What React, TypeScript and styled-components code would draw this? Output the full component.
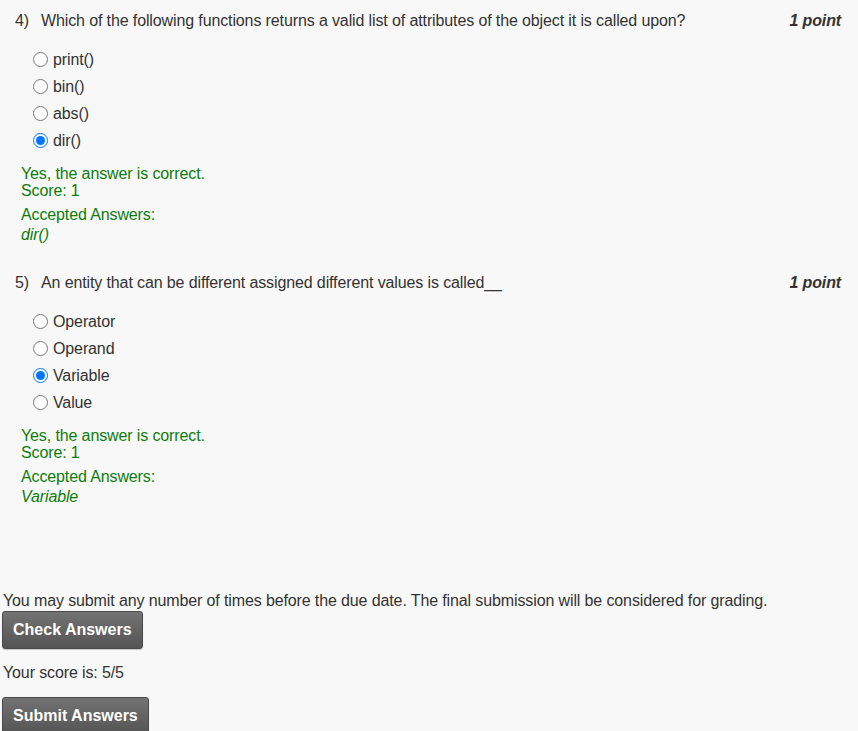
import React from "react";
import styled, { createGlobalStyle } from "styled-components";

const Global = createGlobalStyle`
  html, body { margin: 0; padding: 0; background: #f8f8f8; }
  body {
    font-family: "Liberation Sans", Arial, sans-serif;
    color: #333;
    font-size: 16px;
    letter-spacing: -0.12px;
  }
`;

const Page = styled.div`
  display: flex;
  flex-direction: column;
`;

const QuestionBlock = styled.section<{ $gap?: number }>`
  padding: 11px 17px 0 15px;
  margin-top: ${(p) => p.$gap ?? 0}px;
`;

const TitleRow = styled.div`
  display: flex;
  justify-content: space-between;
  align-items: center;
  line-height: 20px;
  height: 20px;
`;

const TitleText = styled.div`
  display: flex;
  gap: 12px;
`;

const Points = styled.span`
  font-weight: bold;
  font-style: italic;
`;

const Options = styled.div`
  display: flex;
  flex-direction: column;
  padding: 15px 0 0 18px;
`;

const OptionRow = styled.label`
  display: flex;
  align-items: center;
  height: 27px;
  gap: 5px;
`;

const Radio = styled.input`
  width: 15px;
  height: 15px;
  margin: 0;
  accent-color: #0075ff;
`;

const Feedback = styled.div`
  color: #0b7d0b;
  padding: 11px 0 0 6px;
  display: flex;
  flex-direction: column;
`;

const FeedLine = styled.div<{ $mt?: number }>`
  line-height: 17px;
  margin-top: ${(p) => p.$mt ?? 0}px;
`;

const Answer = styled.div`
  font-style: italic;
  line-height: 24px;
`;

const Footer = styled.div`
  margin-top: 83px;
  padding-left: 3px;
  display: flex;
  flex-direction: column;
  align-items: flex-start;
`;

const FooterText = styled.div<{ $mt?: number }>`
  line-height: 18px;
  margin-top: ${(p) => p.$mt ?? 0}px;
`;

const Button = styled.button<{ $mt: number }>`
  margin-top: ${(p) => p.$mt}px;
  margin-left: -1px;
  height: 38px;
  padding: 0 10px;
  border: 1px solid #4a4a4a;
  border-radius: 3px;
  background: linear-gradient(to bottom, #737373, #545454);
  color: #fff;
  font-family: "Liberation Sans", Arial, sans-serif;
  font-weight: bold;
  font-size: 16px;
  letter-spacing: normal;
  box-shadow: 0 1px 1px rgba(0, 0, 0, 0.2);
  cursor: pointer;
`;

type Q = {
  num: number;
  text: string;
  options: string[];
  selected: number;
  answer: string;
};

const questions: Q[] = [
  {
    num: 4,
    text: "Which of the following functions returns a valid list of attributes of the object it is called upon?",
    options: ["print()", "bin()", "abs()", "dir()"],
    selected: 3,
    answer: "dir()",
  },
  {
    num: 5,
    text: "An entity that can be different assigned different values is called__",
    options: ["Operator", "Operand", "Variable", "Value"],
    selected: 2,
    answer: "Variable",
  },
];

export default function App() {
  return (
    <Page>
      <Global />
      {questions.map((q, qi) => (
        <QuestionBlock key={q.num} $gap={qi === 0 ? 0 : 15}>
          <TitleRow>
            <TitleText>
              <span>{q.num})</span>
              <span>{q.text}</span>
            </TitleText>
            <Points>1 point</Points>
          </TitleRow>
          <Options>
            {q.options.map((o, i) => (
              <OptionRow key={o}>
                <Radio type="radio" name={`q${q.num}`} defaultChecked={i === q.selected} />
                <span>{o}</span>
              </OptionRow>
            ))}
          </Options>
          <Feedback>
            <FeedLine>Yes, the answer is correct.</FeedLine>
            <FeedLine>Score: 1</FeedLine>
            <FeedLine $mt={7}>Accepted Answers:</FeedLine>
            <Answer>{q.answer}</Answer>
          </Feedback>
        </QuestionBlock>
      ))}
      <Footer>
        <FooterText>
          You may submit any number of times before the due date. The final submission will be considered for grading.
        </FooterText>
        <Button $mt={1}>Check Answers</Button>
        <FooterText $mt={15}>Your score is: 5/5</FooterText>
        <Button $mt={15}>Submit Answers</Button>
      </Footer>
    </Page>
  );
}
